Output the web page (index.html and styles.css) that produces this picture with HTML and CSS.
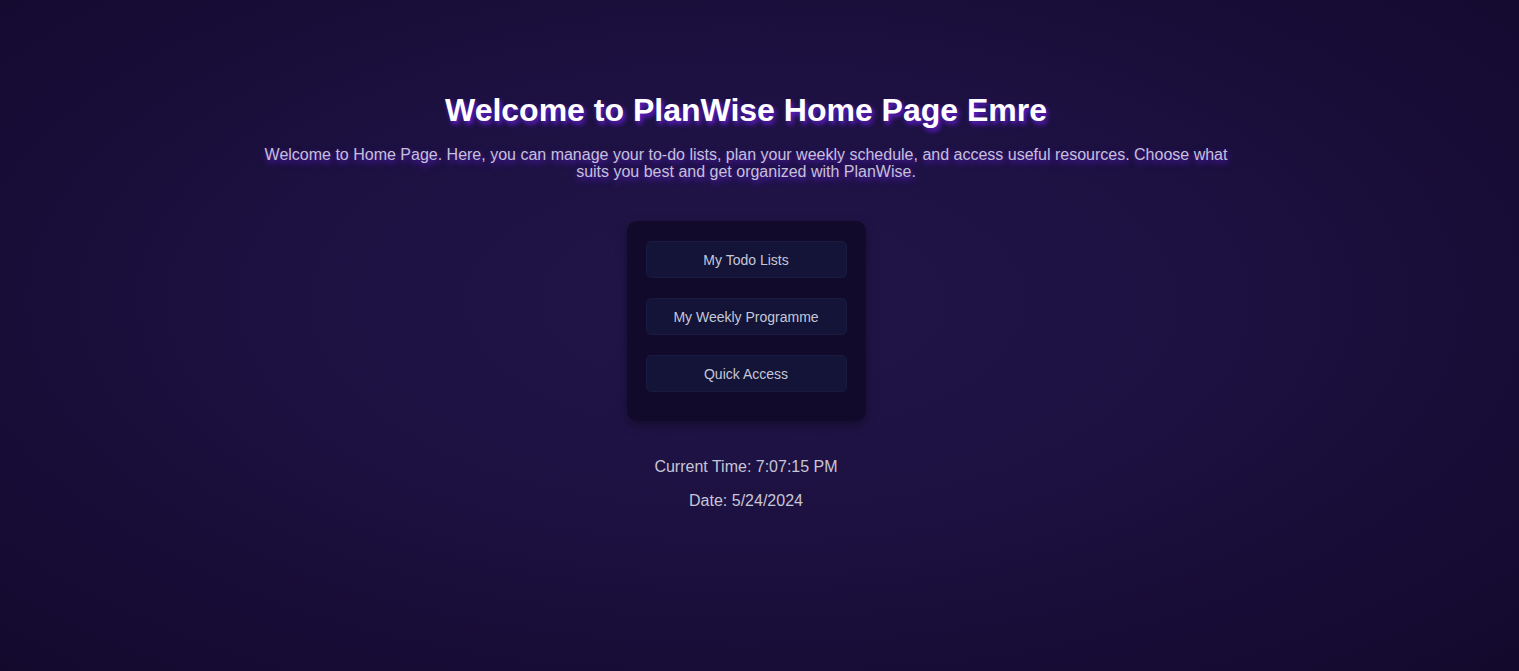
FILE: index.html
```html
<!DOCTYPE html>
<html lang="en">
<head>
<meta charset="utf-8">
<title>PlanWise Home</title>
<link rel="stylesheet" href="styles.css">
</head>
<body>
<main class="page">
  <header class="intro">
    <h1 class="title">Welcome to PlanWise Home Page Emre</h1>
    <p class="lead">Welcome to Home Page. Here, you can manage your to-do lists, plan your weekly schedule, and access useful resources. Choose what suits you best and get organized with PlanWise.</p>
  </header>
  <nav class="menu">
    <button class="menu-btn">My Todo Lists</button>
    <button class="menu-btn">My Weekly Programme</button>
    <button class="menu-btn">Quick Access</button>
  </nav>
  <section class="clock">
    <p class="clock-line">Current Time: 7:07:15 PM</p>
    <p class="clock-line">Date: 5/24/2024</p>
  </section>
</main>
</body>
</html>
```

FILE: styles.css
```css
html, body {
  margin: 0;
  height: 100%;
}
body {
  font-family: "Liberation Sans", Arial, sans-serif;
  background: radial-gradient(ellipse at 49% 45%, #22164a 0%, #1d1142 40%, #13092c 100%);
  background-color: #150b30;
  color: #c9c3dc;
  overflow: hidden;
}
.page {
  display: flex;
  flex-direction: column;
  align-items: center;
  padding: 92px 27px 0 0;
}
.intro {
  max-width: 1000px;
  text-align: center;
}
.title {
  margin: 0;
  font-size: 32px;
  line-height: 37px;
  font-weight: bold;
  color: #ffffff;
  text-shadow: 2px 3px 5px #6a1fe0;
}
.lead {
  margin: 17px 0 0;
  font-size: 16px;
  line-height: 17px;
  color: #c6c0da;
  text-shadow: 1px 3px 6px #5a1dc4;
}
.menu {
  margin-top: 41px;
  width: 239px;
  box-sizing: border-box;
  padding: 20px 19px 29px;
  display: flex;
  flex-direction: column;
  gap: 20px;
  background: #110a2b;
  border-radius: 10px;
  box-shadow: 0 4px 12px rgba(0, 0, 0, 0.35);
}
.menu-btn {
  height: 37px;
  width: 100%;
  border: 1px solid #181a42;
  border-radius: 5px;
  background: #131437;
  color: #c5c8d8;
  font-family: "Liberation Sans", Arial, sans-serif;
  font-size: 14px;
  font-weight: normal;
  cursor: pointer;
}
.clock {
  margin-top: 37px;
  display: flex;
  flex-direction: column;
  align-items: center;
  gap: 16px;
}
.clock-line {
  margin: 0;
  font-size: 16px;
  line-height: 18px;
  color: #c8c5d6;
}
```
